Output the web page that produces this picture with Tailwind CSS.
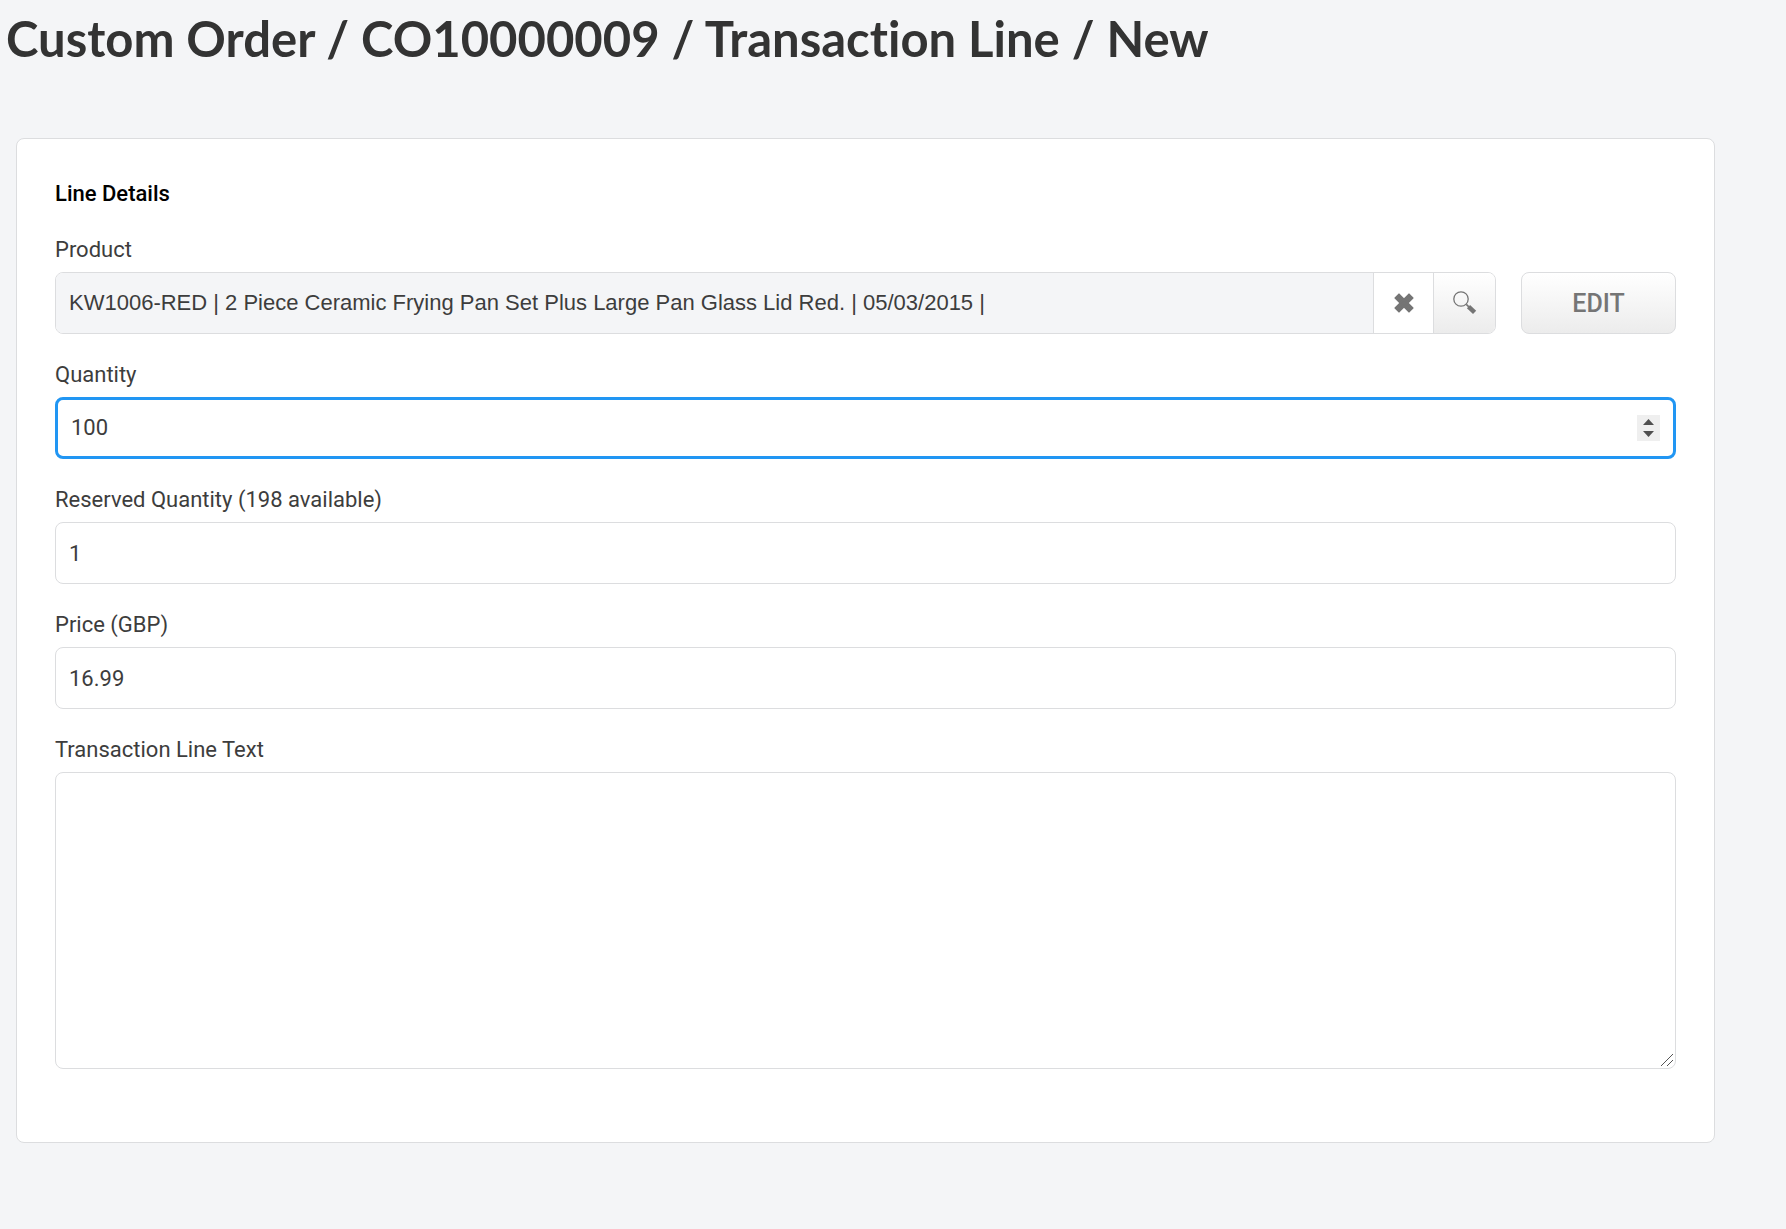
<!DOCTYPE html>
<html lang="en">
<head>
<meta charset="utf-8">
<meta name="viewport" content="width=device-width, initial-scale=1">
<title>Custom Order / Transaction Line / New</title>
<script src="https://cdn.jsdelivr.net/npm/@tailwindcss/browser@4"></script>
</head>
<body class="min-h-screen bg-[#f4f5f7] font-[Roboto,sans-serif] text-[22px] leading-8 text-[#3d3d3d]">
<main class="flex flex-col pb-20">
  <h1 class="px-1.5 pt-1.5 text-[49px] leading-16 font-bold text-[#333] font-[Lato,sans-serif] [font-variant-ligatures:none]">Custom Order / CO10000009 / Transaction Line / New</h1>

  <form class="mt-17 mr-[71px] ml-4 flex flex-col rounded-lg border border-[#dcdddf] bg-white px-[38px] pt-[39px] pb-[73px]">
    <h2 class="font-medium text-black">Line Details</h2>

    <div class="mt-6 flex flex-col gap-1.5">
      <label for="product">Product</label>
      <div class="flex gap-[25px]">
        <div class="flex h-[62px] flex-1 overflow-hidden rounded-lg border border-[#dcdddf]">
          <input id="product" type="text" readonly value="KW1006-RED | 2 Piece Ceramic Frying Pan Set Plus Large Pan Glass Lid Red. | 05/03/2015 |" class="min-w-0 flex-1 bg-[#f4f5f7] px-[13px] font-[Liberation_Sans,Arial,sans-serif] outline-none">
          <button type="button" aria-label="Clear product" class="flex w-[60px] items-center justify-center border-l border-[#dcdddf] bg-white">
            <svg class="size-5" viewBox="0 0 20 20" fill="none" stroke="#757575" stroke-width="6" stroke-linejoin="round"><path d="M3 3 17 17M17 3 3 17"/><path stroke-width="1.6" fill="#757575" d="M5 1.2 1.2 5 15 18.8 18.8 15ZM15 1.2 18.8 5 5 18.8 1.2 15Z"/></svg>
          </button>
          <button type="button" aria-label="Search products" class="flex w-[62px] items-center justify-center border-l border-[#dcdddf] bg-linear-to-b from-white to-[#ececec]">
            <svg class="size-6" viewBox="0 0 24 24" fill="none" stroke="#757575"><circle cx="8" cy="8" r="7.2" stroke-width="1.3"/><path d="M13.3 13.4 15.8 15.8" stroke-width="1.6"/><path d="M15.5 15.6 21.6 21.4" stroke-width="4.6"/></svg>
          </button>
        </div>
        <button type="button" class="h-[62px] w-[155px] rounded-lg border border-[#dcdddf] bg-linear-to-b from-white to-[#ececec] pt-0.5 text-[25px] font-medium text-[#757575]">EDIT</button>
      </div>
    </div>

    <div class="mt-[25px] flex flex-col gap-1.5">
      <label for="quantity">Quantity</label>
      <div class="flex h-[62px] items-center rounded-lg border-3 border-[#2196f3] bg-white pr-[13px]">
        <input id="quantity" type="number" value="100" class="min-w-0 flex-1 appearance-none pl-[13px] outline-none [appearance:textfield]">
        <div class="flex h-[26px] w-[23px] flex-col bg-[#efefef]">
          <button type="button" aria-label="Increase quantity" class="flex flex-1 items-end justify-center pb-[3px]"><svg class="h-[6px] w-[11px]" viewBox="0 0 11 6" fill="#505050"><path d="M5.5 0 11 6H0Z"/></svg></button>
          <button type="button" aria-label="Decrease quantity" class="flex flex-1 items-start justify-center pt-[3px]"><svg class="h-[6px] w-[11px]" viewBox="0 0 11 6" fill="#505050"><path d="M5.5 6 0 0H11Z"/></svg></button>
        </div>
      </div>
    </div>

    <div class="mt-[25px] flex flex-col gap-1.5">
      <label for="reserved">Reserved Quantity (198 available)</label>
      <input id="reserved" type="text" inputmode="numeric" value="1" class="h-[62px] rounded-lg border border-[#dcdddf] bg-white px-[13px] outline-none">
    </div>

    <div class="mt-[25px] flex flex-col gap-1.5">
      <label for="price">Price (GBP)</label>
      <input id="price" type="text" inputmode="decimal" value="16.99" class="h-[62px] rounded-lg border border-[#dcdddf] bg-white px-[13px] outline-none">
    </div>

    <div class="mt-[25px] flex flex-col gap-1.5">
      <label for="text">Transaction Line Text</label>
      <div class="relative flex">
        <textarea id="text" class="h-[297px] flex-1 resize-none rounded-lg border border-[#dcdddf] bg-white px-[13px] py-3 outline-none"></textarea>
        <svg class="pointer-events-none absolute right-[3px] bottom-[3px] size-3" viewBox="0 0 12 12" fill="none" stroke="#555"><path d="M0 12 12 0M6 12 12 6"/></svg>
      </div>
    </div>
  </form>
</main>
</body>
</html>
